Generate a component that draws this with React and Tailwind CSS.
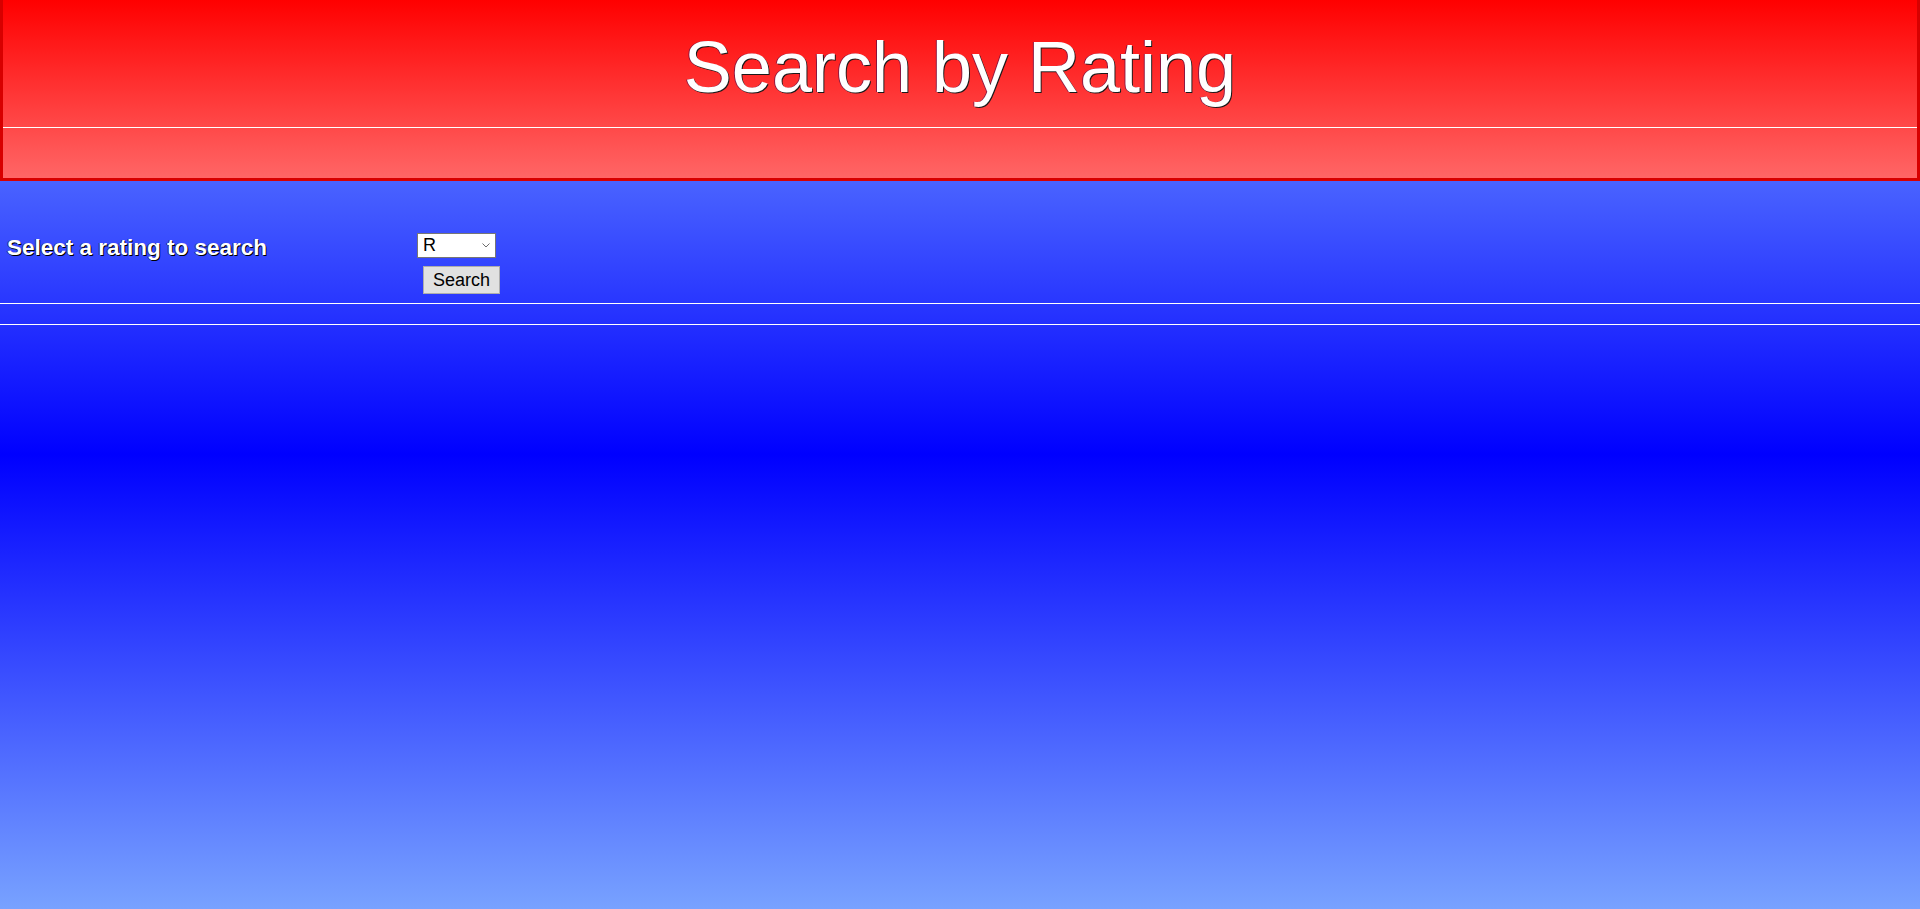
import { useState } from 'react'

const ratings = ['G', 'PG', 'PG-13', 'R', 'NC-17']

export default function App() {
    const [rating, setRating] = useState('R')

    return (
        <div className="min-h-screen bg-[linear-gradient(#7aa4ff,#0000ff_50%,#78a2ff)] font-['Liberation_Sans',Arial,sans-serif]">
            {/* Header */}
            <header className="bg-[linear-gradient(#ff0000,#ff6666)] border-x-[3px] border-b-[3px] border-[#d80000] pt-[31px] h-[181px]">
                <h1 className="text-center text-white text-[72px] leading-[72px] [text-shadow:1px_1px_0_#1a1a1a,-1px_0_0_rgba(0,0,90,0.45)]">
                    Search by Rating
                </h1>
                <div className="mt-[24px] h-px bg-white" />
            </header>

            {/* Search form */}
            <form className="flex pt-[52px]" onSubmit={(e) => e.preventDefault()}>
                <label className="w-[417px] pl-[7px] mt-[2px] text-[22.5px] leading-[25px] font-bold text-white [text-shadow:1px_1px_0_#000,-1px_0_0_rgba(0,0,60,0.5)]">
                    Select a rating to search
                </label>
                <div className="flex flex-col items-start">
                    <div className="relative">
                        <select
                            value={rating}
                            onChange={(e) => setRating(e.target.value)}
                            className="appearance-none w-[79px] h-[25px] bg-white border border-[#767676] pl-[5px] text-[18px] leading-[23px] text-black outline-none"
                        >
                            {ratings.map((r) => (
                                <option key={r} value={r}>{r}</option>
                            ))}
                        </select>
                        <svg className="absolute right-[6px] top-[10px] pointer-events-none" width="8" height="5" viewBox="0 0 8 5">
                            <path d="M0.5 0.5 L4 4 L7.5 0.5" fill="none" stroke="#6d6d6d" strokeWidth="1" />
                        </svg>
                    </div>
                    <button
                        type="submit"
                        className="ml-[6px] mt-[8px] w-[77px] h-[28px] bg-[#e1e1e1] border border-[#adadad] text-[18px] leading-[26px] text-black"
                    >
                        Search
                    </button>
                </div>
            </form>

            <div className="mt-[9px] h-px bg-white" />
            <div className="mt-[20px] h-px bg-white" />
        </div>
    )
}
